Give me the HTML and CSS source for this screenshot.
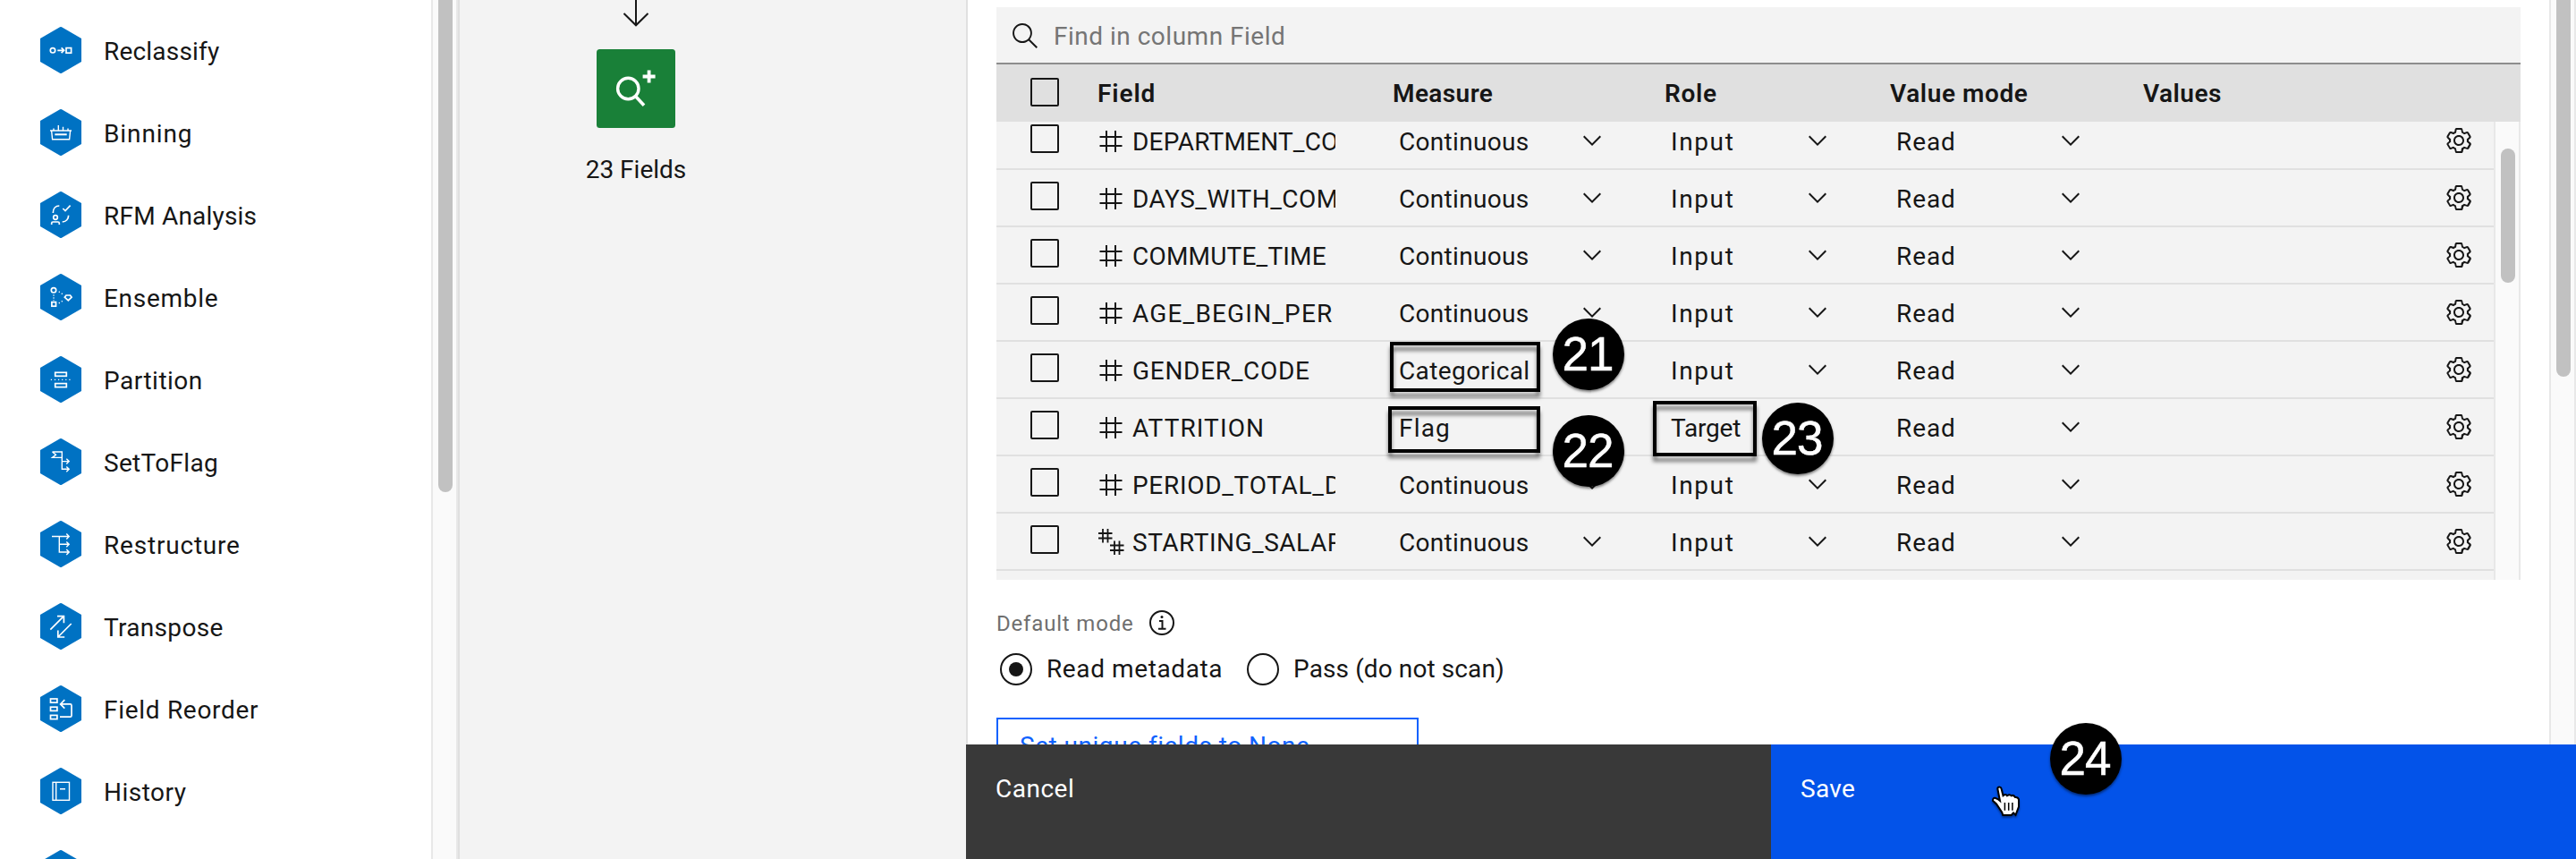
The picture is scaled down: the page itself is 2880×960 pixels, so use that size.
FILE: index.html
```html
<!DOCTYPE html>
<html lang="en">
<head>
<meta charset="utf-8">
<title>Flow editor - Type node</title>
<link rel="stylesheet" href="styles.css">
</head>
<body>
<svg class="defs" aria-hidden="true">
  <symbol id="search" viewBox="0 0 16 16"><path d="M15,14.3L10.7,10c1.9-2.3,1.6-5.8-0.7-7.7S4.2,0.7,2.3,3S0.7,8.8,3,10.7c2,1.7,5,1.7,7,0l4.3,4.3L15,14.3z M2,6.5C2,4,4,2,6.5,2S11,4,11,6.5S9,11,6.5,11S2,9,2,6.5z"/></symbol>
  <symbol id="chevron" viewBox="0 0 16 16"><path d="M8 11L3 6 3.7 5.3 8 9.6 12.3 5.3 13 6z"/></symbol>
  <symbol id="gear" viewBox="0 0 16 16"><path d="M13.5,8.4c0-0.1,0-0.3,0-0.4c0-0.1,0-0.3,0-0.4l1-0.8c0.4-0.3,0.4-0.9,0.2-1.3l-1.2-2C13.3,3.2,13,3,12.6,3c-0.1,0-0.2,0-0.3,0.1l-1.2,0.4c-0.2-0.1-0.4-0.3-0.7-0.4l-0.3-1.3C10.1,1.3,9.7,1,9.2,1H6.8c-0.5,0-0.9,0.3-1,0.8L5.6,3.1C5.3,3.2,5.1,3.3,4.9,3.4L3.7,3C3.6,3,3.5,3,3.4,3C3,3,2.7,3.2,2.5,3.5l-1.2,2C1.1,5.9,1.2,6.4,1.6,6.8l0.9,0.9c0,0.1,0,0.3,0,0.4c0,0.1,0,0.3,0,0.4L1.6,9.2c-0.4,0.3-0.5,0.9-0.2,1.3l1.2,2C2.7,12.8,3,13,3.4,13c0.1,0,0.2,0,0.3-0.1l1.2-0.4c0.2,0.1,0.4,0.3,0.7,0.4l0.3,1.3c0.1,0.5,0.5,0.8,1,0.8h2.4c0.5,0,0.9-0.3,1-0.8l0.3-1.3c0.2-0.1,0.4-0.2,0.7-0.4l1.2,0.4c0.1,0,0.2,0.1,0.3,0.1c0.4,0,0.7-0.2,0.9-0.5l1.1-2c0.2-0.4,0.2-0.9-0.2-1.3L13.5,8.4z M12.6,12l-1.7-0.6c-0.4,0.3-0.9,0.6-1.4,0.8L9.2,14H6.8l-0.4-1.8c-0.5-0.2-0.9-0.5-1.4-0.8L3.4,12l-1.2-2l1.4-1.2c-0.1-0.5-0.1-1.1,0-1.6L2.2,6l1.2-2l1.7,0.6C5.5,4.2,6,4,6.5,3.8L6.8,2h2.4l0.4,1.8c0.5,0.2,0.9,0.5,1.4,0.8L12.6,4l1.2,2l-1.4,1.2c0.1,0.5,0.1,1.1,0,1.6l1.4,1.2L12.6,12z M8,11c-1.7,0-3-1.3-3-3s1.3-3,3-3s3,1.3,3,3C11,9.6,9.7,11,8,11z M8,6C6.9,6,6,6.8,6,7.9C6,7.9,6,8,6,8c0,1.1,0.8,2,1.9,2c0,0,0.1,0,0.1,0c1.1,0,2-0.8,2-1.9c0,0,0-0.1,0-0.1C10,6.9,9.2,6,8,6z"/></symbol>
  <symbol id="hash" viewBox="0 0 32 32"><path d="M11 4v24M21 4v24M3.5 11h25M3.5 21h25" fill="none" stroke="currentColor" stroke-width="2"/></symbol>
  <symbol id="hashes" viewBox="0 0 32 32"><path d="M7 1v15.500M12.500 1v15.500M2 6h15.500M2 11.500h15.500M20 14.500v15.500M25.500 14.500v15.500M15 19.500h15.500M15 25h15.500" fill="none" stroke="currentColor" stroke-width="1.800"/></symbol>
  <symbol id="hex" viewBox="0 0 46 52"><path d="M22 .3q1-.5 2 0L46 13v26L24 51.700q-1 .5-2 0L0 39V13z"/></symbol>
</svg>

<div class="app">
  <aside class="palette">
    <ul class="nodes">
      <li class="node"><svg class="node-icon" viewBox="0 0 46 52"><use href="#hex"/><g class="glyph bold"><circle cx="14" cy="26.300" r="2.700"/><path d="M19.300 26.300h7M23.600 23.400l3 2.900-3 2.900"/><rect x="29" y="23.600" width="5.600" height="5.600"/></g></svg><span class="ls-2">Reclassify</span></li>
      <li class="node"><svg class="node-icon" viewBox="0 0 46 52"><use href="#hex"/><g class="glyph"><path d="M11 24h24M12.600 24l1 9.800h19l1-9.800M15 21.500V24M20.300 18v6M25.500 19.700V24M31 21.500V24"/><path d="M16.300 28.300h13.400" stroke-width="2"/></g></svg><span class="ls-9">Binning</span></li>
      <li class="node"><svg class="node-icon" viewBox="0 0 46 52"><use href="#hex"/><g class="glyph bold"><path d="M14.300 24c0-5 3-8 7-8M31.600 26.700c0 4-2.600 7-6.900 7.300M25.300 19l2.700 2.500 5.600-5.800"/><circle cx="17" cy="29" r="2.300"/><path d="M12.700 37v-1.500q0-1.500 1.500-1.500h5.600q1.500 0 1.500 1.500V37"/></g></svg><span class="ls-2">RFM Analysis</span></li>
      <li class="node"><svg class="node-icon" viewBox="0 0 46 52"><use href="#hex"/><g class="glyph bold"><circle cx="15" cy="18.300" r="2.700"/><rect x="12.900" y="31.600" width="4.600" height="4.600"/><path d="M29 24h4.500l1.600 2.200-3.800 3.700-4-3.700z"/></g><g class="dots"><circle cx="15" cy="24" r=".8"/><circle cx="15" cy="27" r=".8"/><circle cx="15" cy="29.600" r=".6"/><circle cx="21.300" cy="20.300" r=".8"/><circle cx="24.300" cy="22.300" r=".8"/><circle cx="21.300" cy="32.600" r=".8"/><circle cx="24.300" cy="30.700" r=".8"/></g></svg><span class="ls-7">Ensemble</span></li>
      <li class="node"><svg class="node-icon" viewBox="0 0 46 52"><use href="#hex"/><g class="glyph bold"><rect x="16.700" y="18.300" width="12.600" height="4"/><rect x="16.700" y="30.600" width="12.600" height="4"/><path d="M11.800 26.300h23" stroke-width="1.200" stroke-dasharray="1.200 2.900"/></g></svg><span class="ls-5">Partition</span></li>
      <li class="node"><svg class="node-icon" viewBox="0 0 46 52"><use href="#hex"/><g class="glyph"><path d="M13.500 15h10.800v19.300h7.700M24.300 25.600h7.700M29.300 22.700l2.900 2.900-2.900 2.900M29.300 31.400l2.900 2.900-2.900 2.900M24.300 21.400H13.500l4-3.200-4-3.200"/></g></svg><span class="ls-3">SetToFlag</span></li>
      <li class="node"><svg class="node-icon" viewBox="0 0 46 52"><use href="#hex"/><g class="glyph"><path d="M13 17.500h19M21.300 17.500V35h10.700M21.300 26.300h10.700M29.300 14.600l2.900 2.900-2.900 2.900M29.300 23.400l2.900 2.900-2.900 2.900M29.300 32.100l2.900 2.900-2.900 2.900"/></g></svg><span class="ls-8">Restructure</span></li>
      <li class="node"><svg class="node-icon" viewBox="0 0 46 52"><use href="#hex"/><g class="glyph bold"><path d="M11.300 29.700l15-15M19 14.700h7.400v7.600M34.700 23L19.800 38M19.800 30.600V38h7.400"/></g></svg><span class="ls-3">Transpose</span></li>
      <li class="node"><svg class="node-icon" viewBox="0 0 46 52"><use href="#hex"/><g class="glyph bold"><rect x="11.500" y="15" width="7.400" height="4.200"/><rect x="11.500" y="24.200" width="7.400" height="4.200"/><rect x="11.500" y="33.400" width="7.400" height="4.200"/><path d="M22 35.200h11.500q1.500 0 1.500-1.500V22.400q0-1.500-1.500-1.500H22.700M27.300 16.200l-4.700 4.700 4.700 4.700"/></g></svg><span class="ls-7">Field Reorder</span></li>
      <li class="node"><svg class="node-icon" viewBox="0 0 46 52"><use href="#hex"/><g class="glyph"><rect x="14" y="16.300" width="18.500" height="20"/><path d="M17.700 16.300v20M22 23.700h6"/></g></svg><span class="ls-5">History</span></li>
      <li class="node"><svg class="node-icon" viewBox="0 0 46 52"><use href="#hex"/></svg></li>
    </ul>
    <div class="track palette-track"><div class="thumb"></div></div>
  </aside>

  <main class="canvas">
    <svg class="link" viewBox="0 0 30 30"><path d="M15 0v28M1.500 15L15 28.300 28.500 15"/></svg>
    <svg class="extension" viewBox="0 0 88 88"><rect width="88" height="88" rx="3.500"/><g><circle cx="35.300" cy="44" r="11.700"/><path d="M43.500 52.500l9.500 10.300" stroke-width="3.600"/><path d="M51.600 30.500h14M58.600 23.500v14" stroke-width="3.800"/></g></svg>
    <span class="canvas-label">23 Fields</span>
  </main>

  <section class="panel">
    <div class="panel-body">
      <div class="content">
        <div class="find"><svg class="icon"><use href="#search"/></svg><span class="ls-5">Find in column Field</span></div>
        <div class="thead cols">
          <span class="check"></span>
          <span class="head ls-9">Field</span><span class="head ls-4">Measure</span><span class="head ls-7">Role</span><span class="head ls-6">Value mode</span><span class="head ls-5">Values</span>
        </div>
        <div class="viewport">
          <div class="rows">
            <div class="row cols"><span class="check"></span><div class="name"><svg class="icon"><use href="#hash"/></svg><span class="txt ls-2">DEPARTMENT_CO</span></div><div class="sel measure"><span class="ls-3">Continuous</span><svg class="icon"><use href="#chevron"/></svg></div><div class="sel role"><span class="ls-15">Input</span><svg class="icon"><use href="#chevron"/></svg></div><div class="sel mode"><span class="ls-9">Read</span><svg class="icon"><use href="#chevron"/></svg></div><svg class="icon set"><use href="#gear"/></svg></div>
            <div class="row cols"><span class="check"></span><div class="name"><svg class="icon"><use href="#hash"/></svg><span class="txt ls-5">DAYS_WITH_COM</span></div><div class="sel measure"><span class="ls-3">Continuous</span><svg class="icon"><use href="#chevron"/></svg></div><div class="sel role"><span class="ls-15">Input</span><svg class="icon"><use href="#chevron"/></svg></div><div class="sel mode"><span class="ls-9">Read</span><svg class="icon"><use href="#chevron"/></svg></div><svg class="icon set"><use href="#gear"/></svg></div>
            <div class="row cols"><span class="check"></span><div class="name"><svg class="icon"><use href="#hash"/></svg><span class="txt ls-2">COMMUTE_TIME</span></div><div class="sel measure"><span class="ls-3">Continuous</span><svg class="icon"><use href="#chevron"/></svg></div><div class="sel role"><span class="ls-15">Input</span><svg class="icon"><use href="#chevron"/></svg></div><div class="sel mode"><span class="ls-9">Read</span><svg class="icon"><use href="#chevron"/></svg></div><svg class="icon set"><use href="#gear"/></svg></div>
            <div class="row cols"><span class="check"></span><div class="name"><svg class="icon"><use href="#hash"/></svg><span class="txt ls-12">AGE_BEGIN_PER</span></div><div class="sel measure"><span class="ls-3">Continuous</span><svg class="icon"><use href="#chevron"/></svg></div><div class="sel role"><span class="ls-15">Input</span><svg class="icon"><use href="#chevron"/></svg></div><div class="sel mode"><span class="ls-9">Read</span><svg class="icon"><use href="#chevron"/></svg></div><svg class="icon set"><use href="#gear"/></svg></div>
            <div class="row cols"><span class="check"></span><div class="name"><svg class="icon"><use href="#hash"/></svg><span class="txt ls-7">GENDER_CODE</span></div><div class="sel measure"><span class="ls-4">Categorical</span></div><div class="sel role"><span class="ls-15">Input</span><svg class="icon"><use href="#chevron"/></svg></div><div class="sel mode"><span class="ls-9">Read</span><svg class="icon"><use href="#chevron"/></svg></div><svg class="icon set"><use href="#gear"/></svg></div>
            <div class="row cols"><span class="check"></span><div class="name"><svg class="icon"><use href="#hash"/></svg><span class="txt ls-11">ATTRITION</span></div><div class="sel measure"><span class="ls-12">Flag</span></div><div class="sel role"><span class="ls-0">Target</span></div><div class="sel mode"><span class="ls-9">Read</span><svg class="icon"><use href="#chevron"/></svg></div><svg class="icon set"><use href="#gear"/></svg></div>
            <div class="row cols"><span class="check"></span><div class="name"><svg class="icon"><use href="#hash"/></svg><span class="txt ls-7">PERIOD_TOTAL_D</span></div><div class="sel measure"><span class="ls-3">Continuous</span><svg class="icon"><use href="#chevron"/></svg></div><div class="sel role"><span class="ls-15">Input</span><svg class="icon"><use href="#chevron"/></svg></div><div class="sel mode"><span class="ls-9">Read</span><svg class="icon"><use href="#chevron"/></svg></div><svg class="icon set"><use href="#gear"/></svg></div>
            <div class="row cols"><span class="check"></span><div class="name"><svg class="icon"><use href="#hashes"/></svg><span class="txt ls-5">STARTING_SALAR</span></div><div class="sel measure"><span class="ls-3">Continuous</span><svg class="icon"><use href="#chevron"/></svg></div><div class="sel role"><span class="ls-15">Input</span><svg class="icon"><use href="#chevron"/></svg></div><div class="sel mode"><span class="ls-9">Read</span><svg class="icon"><use href="#chevron"/></svg></div><svg class="icon set"><use href="#gear"/></svg></div>
          </div>
          <div class="track table-track"><div class="thumb"></div></div>
        </div>

        <div class="mode-label"><span>Default mode</span><svg class="info" viewBox="0 0 32 32"><circle cx="16" cy="16" r="13"/><path d="M13 14h3.500v8.500M12 22.700h8.500"/><circle class="dot" cx="16" cy="9.500" r="1.500"/></svg></div>
        <div class="radios">
          <label class="radio"><span class="ring on"></span><span class="ls-6">Read metadata</span></label>
          <label class="radio"><span class="ring"></span><span class="ls-1">Pass (do not scan)</span></label>
        </div>
        <button class="outline ls-5">Set unique fields to None</button>
      </div>
      <div class="track panel-track"><div class="thumb"></div></div>
    </div>
    <footer class="actions"><button class="cancel ls-5">Cancel</button><button class="save ls-3">Save</button></footer>
  </section>
</div>

<div class="frame frame-categorical"></div>
<div class="frame frame-flag"></div>
<div class="frame frame-target"></div>
<div class="step step-21">21</div>
<div class="step step-22">22</div>
<div class="step step-23">23</div>
<div class="step step-24">24</div>
<svg class="pointer" viewBox="0 0 40 46"><path d="M11.300 9.300Q11.500 7.500 13.300 7.500T15.500 9.300L17.500 17.300Q20.500 14.800 22 17.300 25 15 26.600 17.300 29.500 16 31 19 34 18.600 35 21.300V29.500L31.500 38.800 29 36.500 26.700 39H17.300L16.300 36 10 26.500 6 22.700Q6 19.500 8.500 19.800L11.500 21 14 23z"/><path class="fingers" d="M19.400 25v8.700M23.700 25v8.700M27.900 25v8.700"/></svg>
</body>
</html>
```
FILE: styles.css
```css
* { box-sizing: border-box; }
body {
  margin: 0;
  width: 2880px;
  height: 960px;
  overflow: hidden;
  background: #fff;
  color: #161616;
  font-family: Roboto, "Noto Sans", sans-serif;
  font-size: 28px;
  line-height: 36px;
}
button { font: inherit; border: 0; text-align: left; }
.defs { position: absolute; width: 0; height: 0; }
.app { display: flex; width: 2880px; height: 960px; }
.icon { width: 32px; height: 32px; flex: none; fill: currentColor; }

.ls-0 { letter-spacing: -.2px; }
.ls-1 { letter-spacing: .1px; }
.ls-2 { letter-spacing: .2px; }
.ls-3 { letter-spacing: .32px; }
.ls-4 { letter-spacing: .4px; }
.ls-5 { letter-spacing: .5px; }
.ls-6 { letter-spacing: .6px; }
.ls-7 { letter-spacing: .7px; }
.ls-8 { letter-spacing: .8px; }
.ls-9 { letter-spacing: .9px; }
.ls-11 { letter-spacing: 1.1px; }
.ls-12 { letter-spacing: 1.17px; }
.ls-15 { letter-spacing: 1.6px; }

/* scrollbars */
.track { flex: none; background: #fafafa; border: solid #e8e8e8; border-width: 0 2px; }
.thumb { background: #c1c1c1; }

/* palette */
.palette { display: flex; width: 514px; flex: none; border-right: 2px solid #e0e0e0; }
.nodes { flex: 1; height: 960px; overflow: hidden; margin: 0; padding: 10px 0 0 45px; list-style: none; }
.node { display: flex; align-items: center; gap: 25px; height: 92px; }
.node span { padding-top: 3px; }
.node-icon { width: 46px; height: 52px; fill: #0072c3; }
.glyph { fill: none; stroke: #fff; stroke-width: 1.4; }
.glyph.bold { stroke-width: 1.7; }
.dots { fill: #fff; }
.palette-track { width: 30px; padding-left: 6px; }
.palette-track .thumb { width: 16px; height: 550px; border-radius: 0 0 8px 8px; }

/* canvas */
.canvas { display: flex; flex-direction: column; align-items: center; width: 566px; padding-right: 172px; background: #f3f3f3; }
.link { width: 30px; height: 30px; fill: none; stroke: #161616; stroke-width: 2; }
.extension { width: 88px; height: 88px; margin-top: 25px; fill: #198038; }
.extension g { fill: none; stroke: #fff; stroke-width: 3.4; }
.canvas-label { margin-top: 29px; }

/* properties panel */
.panel { display: flex; flex-direction: column; width: 1800px; }
.panel-body { display: flex; height: 832px; overflow: hidden; border-left: 2px solid #e0e0e0; }
.content { width: 1768px; padding: 8px 32px 0; }
.find { display: flex; align-items: center; gap: 16px; height: 64px; padding: 0 16px; background: #f3f3f3; border-bottom: 2px solid #8d8d8d; color: #757575; }
.find .icon { color: #161616; margin-top: 2px; }
.find span { padding-top: 3px; }
.cols { display: grid; grid-template-columns: 76px 330px 304px 252px 283px 1fr; align-items: center; padding-left: 38px; }
.check { width: 32px; height: 32px; border: 2px solid #161616; border-radius: 2px; }
.thead { height: 64px; background: #e0e0e0; font-weight: 600; }
.thead .check { margin-top: -2px; }
.head { margin-left: -1px; padding-top: 2px; }
.viewport { display: flex; height: 512px; overflow: hidden; background: #f3f3f3; }
.rows { width: 1674px; margin-top: -10px; }
.row { height: 64px; border-bottom: 2px solid #e0e0e0; }
.row .check { margin-top: -4px; }
.name { display: flex; align-items: center; width: 268px; gap: 8px; margin-left: -2px; overflow: hidden; }
.name .icon { margin-top: 1px; }
.txt { flex: 1; overflow: hidden; white-space: nowrap; padding-top: 3px; margin-right: 1px; }
.sel { display: flex; align-items: center; justify-content: space-between; margin-left: 6px; }
.sel span { padding-top: 3px; }
.measure { width: 232px; }
.role { width: 180px; }
.mode { width: 211px; }
.set { justify-self: end; margin-right: 23px; grid-column: 6; }
.table-track { width: 30px; padding: 30px 0 0 6px; }
.table-track .thumb { width: 16px; height: 150px; border-radius: 8px; }

.mode-label { display: flex; align-items: center; gap: 15px; margin-top: 30px; height: 36px; font-size: 24px; letter-spacing: .82px; color: #6f6f6f; }
.mode-label span { padding-top: 1px; }
.info { width: 32px; height: 32px; fill: none; stroke: #161616; stroke-width: 2; }
.info .dot { fill: #161616; stroke: none; }
.radios { display: flex; gap: 28px; margin: 16px 0 0 4px; height: 36px; }
.radio { display: flex; align-items: center; gap: 16px; }
.radio + .radio { margin-left: -1px; }
.ring { display: flex; align-items: center; justify-content: center; width: 36px; height: 36px; border: 2px solid #161616; border-radius: 50%; }
.ring.on::before { content: ""; width: 16px; height: 16px; border-radius: 50%; background: #161616; }
.outline { display: block; width: 472px; height: 64px; margin-top: 36px; padding: 4px 24px; border: 2px solid #0f62fe; background: #fff; color: #0f62fe; }
.panel-track { width: 30px; padding-left: 6px; }
.panel-track .thumb { width: 16px; height: 421px; border-radius: 0 0 8px 8px; }

.actions { display: flex; height: 128px; }
.actions button { display: flex; align-items: flex-start; width: 900px; padding: 32px 33px; color: #fff; }
.cancel { background: #393939; }
.save { background: #0353e9; }

/* tutorial annotations laid over the interface */
.frame { position: absolute; border: 4px solid #000; filter: drop-shadow(0 6px 2px rgba(0, 0, 0, .5)); }
.frame-categorical { left: 1554px; top: 382px; width: 168px; height: 56px; }
.frame-flag { left: 1552px; top: 454px; width: 170px; height: 52px; }
.frame-target { left: 1848px; top: 448px; width: 116px; height: 62px; }
.step { position: absolute; width: 80px; height: 80px; padding-right: 2px; border-radius: 50%; background: #000; color: #fff; font: 53px/80px "Liberation Sans", Arial, sans-serif; letter-spacing: -1px; -webkit-text-stroke: .5px #fff; text-align: center; box-shadow: 0 2px 3px rgba(0, 0, 0, .5); }
.step-21 { left: 1736px; top: 356px; }
.step-22 { left: 1736px; top: 464px; }
.step-23 { left: 1970px; top: 450px; }
.step-24 { left: 2292px; top: 808px; }
.pointer { position: absolute; left: 2222px; top: 872px; width: 40px; height: 46px; fill: #fff; stroke: #000; stroke-width: 2; filter: drop-shadow(0 2px 1px rgba(0, 0, 0, .4)); }
.pointer .fingers { fill: none; stroke-width: 1.5; }
```
